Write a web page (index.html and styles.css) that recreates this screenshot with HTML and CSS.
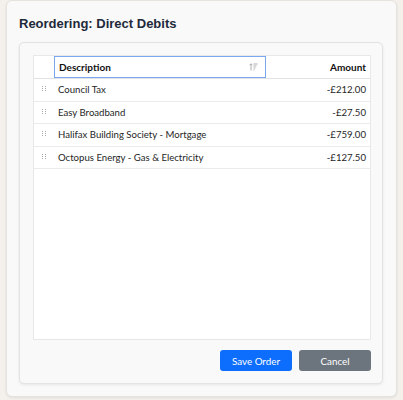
FILE: index.html
```html
<!DOCTYPE html>
<html>
<head>
<meta charset="utf-8">
<link rel="stylesheet" href="styles.css">
</head>
<body>
<div class="panel">
  <h1 class="title">Reordering: Direct Debits</h1>
  <div class="card">
    <div class="grid">
      <div class="row head">
        <div class="cell handle"></div>
        <div class="cell desc focus">
          <span>Description</span>
          <svg class="sort" width="9" height="8" viewBox="0 0 9 8">
            <path d="M2 7.5V0.8M0.5 2.3L2 0.8L3.5 2.3" fill="none" stroke="#adadad" stroke-width="1"/>
            <path d="M4.5 1H8.5M4.5 3H7.5M4.5 5H6.5M4.5 7H5.5" fill="none" stroke="#adadad" stroke-width="1"/>
          </svg>
        </div>
        <div class="cell amt">Amount</div>
      </div>
      <div class="row">
        <div class="cell handle"><svg class="dots" width="4" height="5" viewBox="0 0 4 5"><path d="M0 0h1v1H0zM3 0h1v1H3zM0 2h1v1H0zM3 2h1v1H3zM0 4h1v1H0zM3 4h1v1H3z" fill="#a8a8a8"/></svg></div>
        <div class="cell desc">Council Tax</div>
        <div class="cell amt">-£212.00</div>
      </div>
      <div class="row">
        <div class="cell handle"><svg class="dots" width="4" height="5" viewBox="0 0 4 5"><path d="M0 0h1v1H0zM3 0h1v1H3zM0 2h1v1H0zM3 2h1v1H3zM0 4h1v1H0zM3 4h1v1H3z" fill="#a8a8a8"/></svg></div>
        <div class="cell desc">Easy Broadband</div>
        <div class="cell amt">-£27.50</div>
      </div>
      <div class="row">
        <div class="cell handle"><svg class="dots" width="4" height="5" viewBox="0 0 4 5"><path d="M0 0h1v1H0zM3 0h1v1H3zM0 2h1v1H0zM3 2h1v1H3zM0 4h1v1H0zM3 4h1v1H3z" fill="#a8a8a8"/></svg></div>
        <div class="cell desc">Halifax Building Society - Mortgage</div>
        <div class="cell amt">-£759.00</div>
      </div>
      <div class="row">
        <div class="cell handle"><svg class="dots" width="4" height="5" viewBox="0 0 4 5"><path d="M0 0h1v1H0zM3 0h1v1H3zM0 2h1v1H0zM3 2h1v1H3zM0 4h1v1H0zM3 4h1v1H3z" fill="#a8a8a8"/></svg></div>
        <div class="cell desc">Octopus Energy - Gas &amp; Electricity</div>
        <div class="cell amt">-£127.50</div>
      </div>
    </div>
    <div class="actions">
      <button class="btn save">Save Order</button>
      <button class="btn cancel">Cancel</button>
    </div>
  </div>
</div>
</body>
</html>
```
FILE: styles.css
```css
html, body {
  margin: 0;
  padding: 0;
}
body {
  background: #f4f1ec;
  width: 403px;
  height: 400px;
  overflow: hidden;
}
.panel {
  box-sizing: border-box;
  margin: 0 6px;
  height: 397px;
  background: #f9f9f9;
  border: 1px solid #e6e3de;
  border-radius: 6px;
  box-shadow: 0 1px 3px rgba(0,0,0,0.08);
  padding: 14px 13px 0 12px;
}
.title {
  margin: 0;
  font-family: "Liberation Sans", Arial, sans-serif;
  font-weight: bold;
  font-size: 13px;
  line-height: 17px;
  color: #1e2a3b;
}
.card {
  margin-top: 10px;
  box-sizing: border-box;
  height: 342px;
  background: #f9f9f9;
  border: 1px solid #e3e3e3;
  border-radius: 5px;
  box-shadow: 0 1px 3px rgba(0,0,0,0.08);
  padding: 12px 11px 12px 13px;
  display: flex;
  flex-direction: column;
}
.grid {
  flex: 1;
  background: #fff;
  border: 1px solid #e8e8e8;
  font-family: Lato, "Open Sans", sans-serif;
  font-size: 9.6px;
  color: #262626;
}
.row {
  display: flex;
  height: 22.5px;
  border-bottom: 1px solid #ebebeb;
  box-sizing: border-box;
  align-items: center;
}
.row.head {
  height: 23px;
  border-bottom: 1px solid #e2e2e2;
  font-weight: bold;
  font-size: 10px;
  color: #111;
}
.cell {
  box-sizing: border-box;
  height: 100%;
  display: flex;
  align-items: center;
}
.handle {
  width: 20px;
  justify-content: center;
}
.desc {
  width: 212px;
  padding-left: 4px;
}
.desc.focus {
  border: 1px solid #7aa7f0;
  padding-left: 4px;
  padding-right: 7px;
  justify-content: space-between;
}
.amt {
  flex: 1;
  justify-content: flex-end;
  padding-right: 4px;
}
.dots {
  display: block;
  margin-top: -2px;
}
.sort {
  display: block;
}
.actions {
  display: flex;
  justify-content: flex-end;
  gap: 7px;
  margin-top: 10px;
}
.btn {
  width: 72px;
  height: 21px;
  border: none;
  border-radius: 3px;
  color: #fff;
  font-family: Lato, "Open Sans", sans-serif;
  font-size: 9.8px;
  padding: 0;
}
.save {
  background: #0d6efd;
}
.cancel {
  background: #6c757d;
}
```
